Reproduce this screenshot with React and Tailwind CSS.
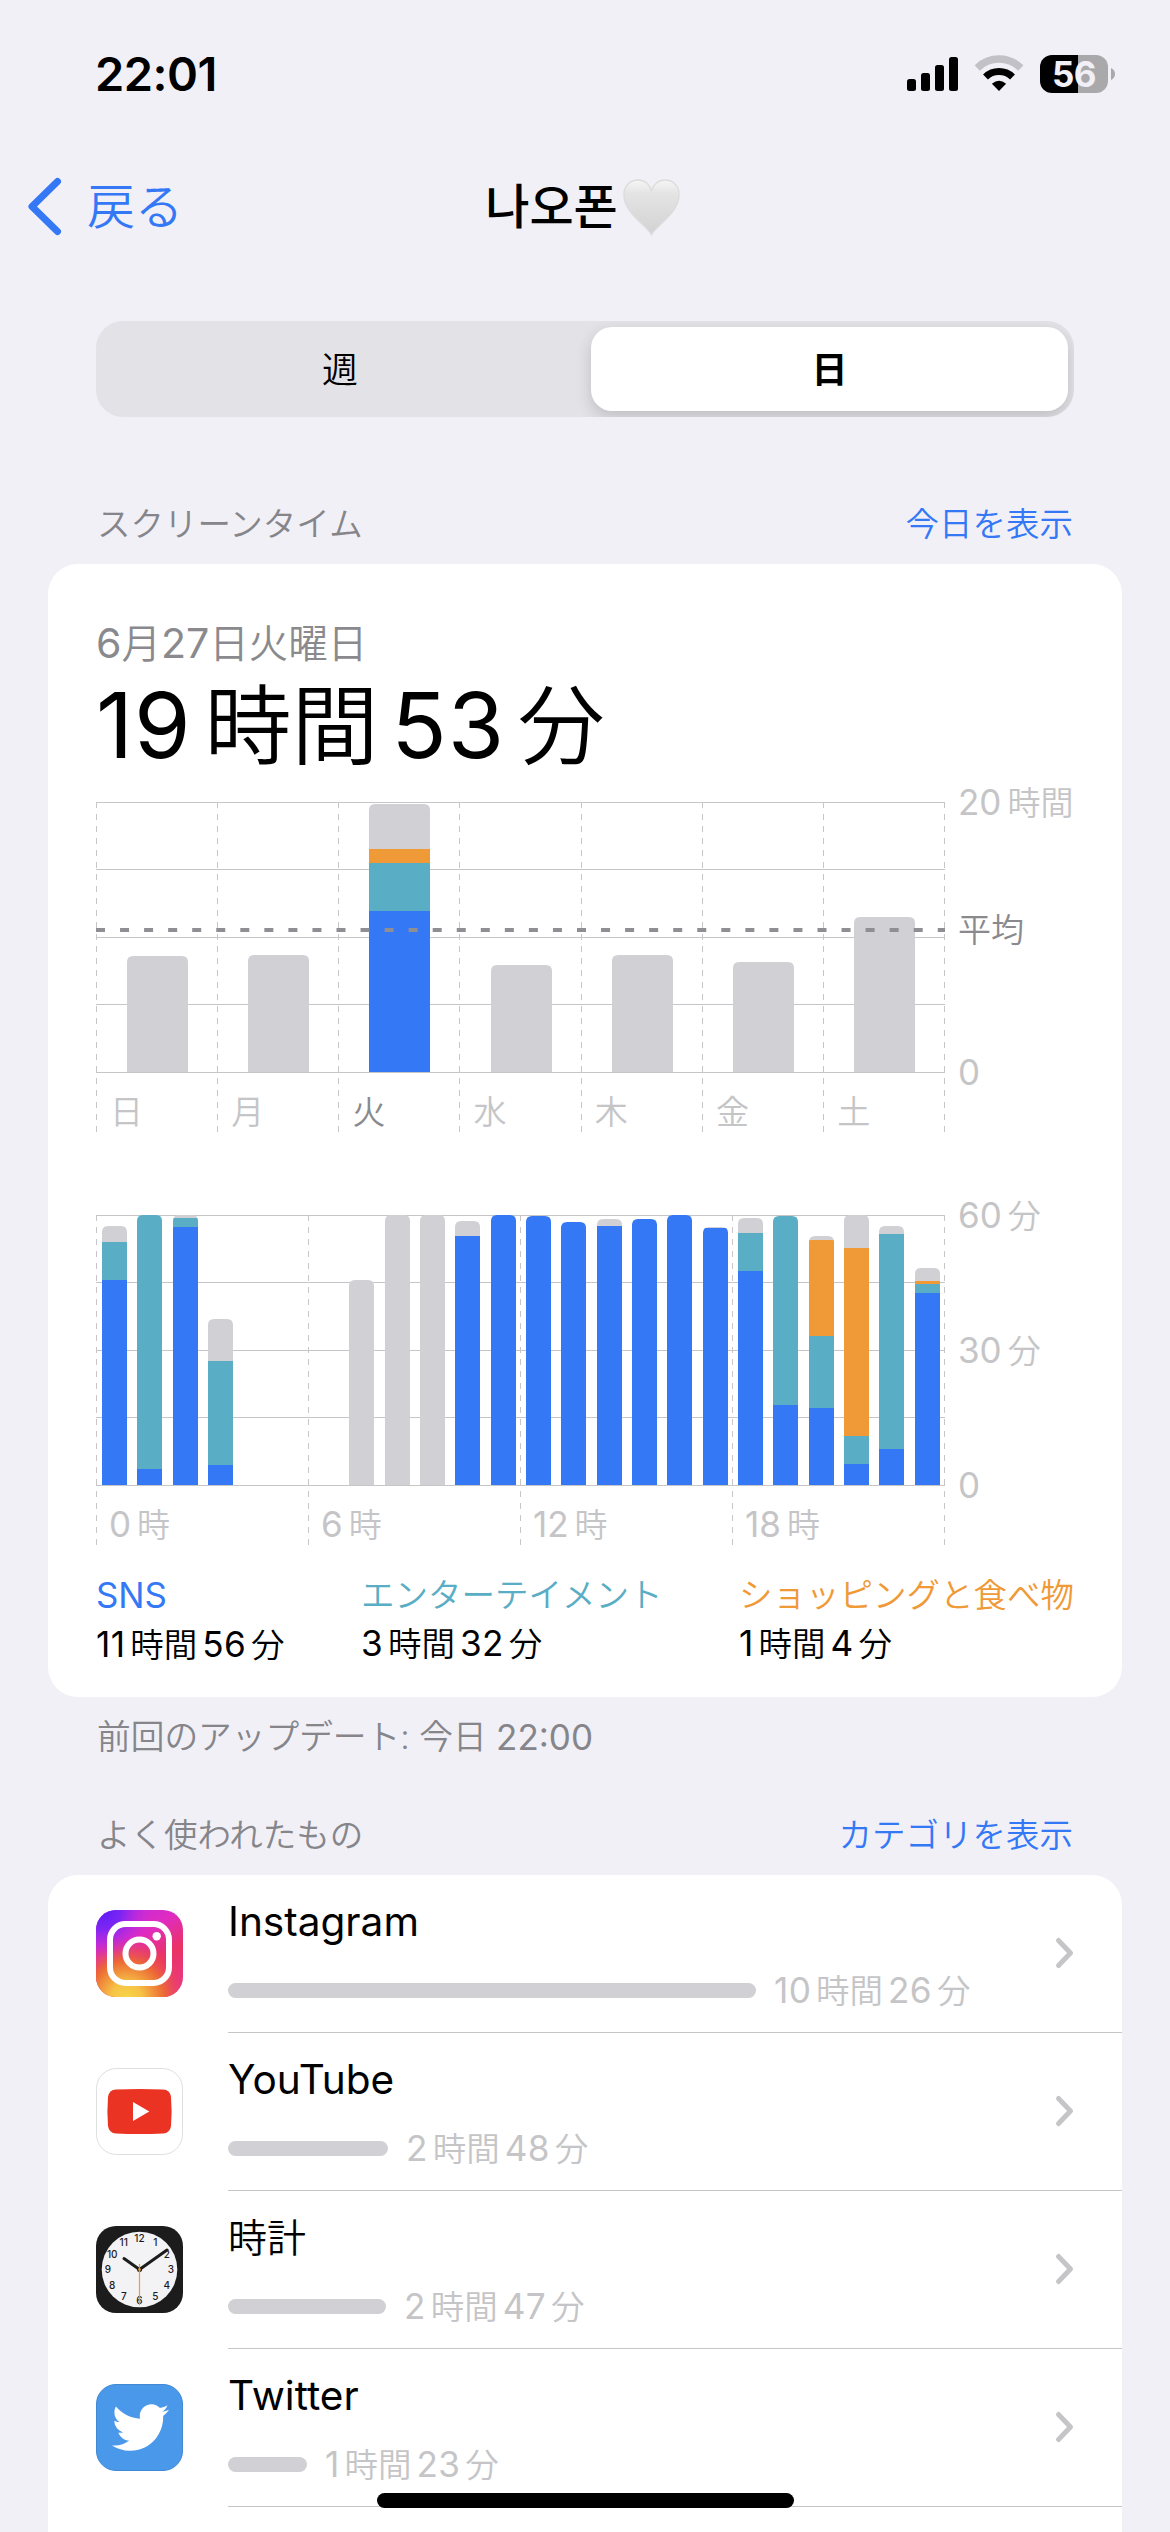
import React from "react";
import { FaTwitter } from "react-icons/fa";

const BLUE = "#3478f6";
const TEAL = "#59adc4";
const ORANGE = "#ef9a37";
const GRAY = "#d1d0d5";
const COLORS = [BLUE, TEAL, ORANGE, GRAY];

// Segment heights in px, bottom to top: SNS, entertainment, shopping, other.
const week = [
  { label: "日", bar: [0, 0, 0, 116] },
  { label: "月", bar: [0, 0, 0, 117] },
  { label: "火", bar: [161, 48, 14, 45], active: true },
  { label: "水", bar: [0, 0, 0, 107] },
  { label: "木", bar: [0, 0, 0, 117] },
  { label: "金", bar: [0, 0, 0, 110] },
  { label: "土", bar: [0, 0, 0, 155] },
];

const hours = [
  [205, 38, 0, 16],
  [16, 254, 0, 0],
  [258, 9, 0, 3],
  [20, 104, 0, 42],
  [0, 0, 0, 0],
  [0, 0, 0, 0],
  [0, 0, 0, 0],
  [0, 0, 0, 205],
  [0, 0, 0, 270],
  [0, 0, 0, 270],
  [249, 0, 0, 15],
  [270, 0, 0, 0],
  [269, 0, 0, 0],
  [263, 0, 0, 0],
  [259, 0, 0, 7],
  [266, 0, 0, 0],
  [270, 0, 0, 0],
  [257, 0, 0, 1],
  [214, 38, 0, 15],
  [80, 189, 0, 0],
  [77, 72, 96, 4],
  [21, 28, 188, 33],
  [36, 215, 0, 8],
  [192, 9, 3, 13],
];

const legend = [
  { name: "SNS", time: "11時間56分", color: "text-[#3478f6]" },
  { name: "エンターテイメント", time: "3時間32分", color: "text-[#59adc4]" },
  { name: "ショッピングと食べ物", time: "1時間4分", color: "text-[#ef9a37]" },
];

const apps = [
  { name: "Instagram", time: "10時間26分", width: 528, Icon: InstagramIcon },
  { name: "YouTube", time: "2時間48分", width: 160, Icon: YouTubeIcon },
  { name: "時計", time: "2時間47分", width: 158, Icon: ClockIcon },
  { name: "Twitter", time: "1時間23分", width: 79, Icon: TwitterIcon },
];

// Latin runs sit slightly larger and heavier than the Japanese around them.
function Mixed({ text, spaced }) {
  return text
    .split(/([0-9A-Za-z:]+)/)
    .filter(Boolean)
    .map((part, i) =>
      /[0-9A-Za-z]/.test(part) ? (
        <span
          key={i}
          className={
            spaced
              ? "mx-[0.14em] text-[1.05em] font-normal tracking-[0.01em] first:ml-0"
              : "text-[1.04em] font-normal"
          }
        >
          {part}
        </span>
      ) : (
        <span key={i}>{part}</span>
      )
    );
}

function ChartText({ x, y, text, fill = "#c5c5c7" }) {
  const [, digits, rest] = text.match(/^(\d*)(.*)$/);
  return (
    <text x={x} y={y} fill={fill} fontSize="33" fontWeight="350">
      {digits && (
        <tspan fontSize="35" fontWeight="400">
          {digits}
        </tspan>
      )}
      {rest && <tspan dx={digits ? 6 : 0}>{rest}</tspan>}
    </text>
  );
}

function Bar({ id, x, width, segments }) {
  const total = segments.reduce((a, b) => a + b, 0);
  if (!total) return null;
  let y = 292;
  return (
    <g>
      <clipPath id={id}>
        <path
          d={`M${x} 292V${298 - total}q0-6 6-6h${width - 12}q6 0 6 6V292z`}
        />
      </clipPath>
      <g clipPath={`url(#${id})`}>
        {segments.map((h, i) => {
          y -= h;
          return h ? (
            <rect key={i} x={x} y={y} width={width} height={h} fill={COLORS[i]} />
          ) : null;
        })}
      </g>
    </g>
  );
}

function Chart({ columns, children }) {
  return (
    <svg
      width="976"
      height="360"
      viewBox="0 0 976 360"
      className="block overflow-visible"
    >
      {[22, 89, 157, 224, 292].map((y) => (
        <rect key={y} x="0" y={y} width="849" height="1" fill="#c6c6c8" />
      ))}
      {Array.from({ length: columns + 1 }, (_, i) => {
        const x = Math.round((i * 848) / columns) + 0.5;
        return (
          <path
            key={i}
            d={`M${x} 22V352`}
            stroke="#c6c6c8"
            strokeDasharray="6 6"
          />
        );
      })}
      {children}
    </svg>
  );
}

function WeekChart() {
  return (
    <Chart columns={7}>
      {week.map((d, i) => (
        <g key={d.label}>
          <Bar
            id={`day-${i}`}
            x={Math.round(i * 121.2 + 31)}
            width={61}
            segments={d.bar}
          />
          <ChartText
            x={i * 121.2 + 14}
            y={344}
            text={d.label}
            fill={d.active ? "#8a8a8e" : undefined}
          />
        </g>
      ))}
      <path
        d="M0 150H849"
        stroke="#8e8e93"
        strokeWidth="4"
        strokeDasharray="9 15.05"
      />
      <ChartText x={862} y={35} text="20時間" />
      <ChartText x={862} y={162} text="平均" fill="#8a8a8e" />
      <ChartText x={862} y={305} text="0" />
    </Chart>
  );
}

function DayChart() {
  return (
    <Chart columns={4}>
      {hours.map((segments, i) => (
        <Bar
          key={i}
          id={`hour-${i}`}
          x={Math.round(i * 35.33 + 6)}
          width={25}
          segments={segments}
        />
      ))}
      {["0時", "6時", "12時", "18時"].map((t, i) => (
        <ChartText key={t} x={i * 212 + 13} y={344} text={t} />
      ))}
      <ChartText x={862} y={35} text="60分" />
      <ChartText x={862} y={170} text="30分" />
      <ChartText x={862} y={305} text="0" />
    </Chart>
  );
}

function InstagramIcon() {
  return (
    <svg width="87" height="87" viewBox="0 0 87 87">
      <defs>
        <linearGradient id="ig-base" x1="0.2" y1="0" x2="0.8" y2="1">
          <stop offset="0" stopColor="#c02bdc" />
          <stop offset="0.35" stopColor="#e02cc0" />
          <stop offset="0.65" stopColor="#ea3263" />
          <stop offset="1" stopColor="#e9388a" />
        </linearGradient>
        <radialGradient id="ig-warm" cx="0.35" cy="1.02" r="0.72">
          <stop offset="0" stopColor="#f8d648" />
          <stop offset="0.25" stopColor="#f6c245" />
          <stop offset="0.6" stopColor="#ec6a35" />
          <stop offset="1" stopColor="#ea3263" stopOpacity="0" />
        </radialGradient>
        <radialGradient id="ig-cool" cx="0.08" cy="0" r="0.55">
          <stop offset="0" stopColor="#5a1df5" />
          <stop offset="0.4" stopColor="#7f25f3" />
          <stop offset="1" stopColor="#c82be0" stopOpacity="0" />
        </radialGradient>
      </defs>
      <rect width="87" height="87" rx="20" fill="url(#ig-base)" />
      <rect width="87" height="87" rx="20" fill="url(#ig-warm)" />
      <rect width="87" height="87" rx="20" fill="url(#ig-cool)" />
      <g fill="none" stroke="#fff" strokeWidth="6">
        <rect x="14" y="14" width="59" height="59" rx="15.5" />
        <circle cx="43.5" cy="43.5" r="14" />
      </g>
      <circle cx="60.7" cy="26.3" r="4.2" fill="#fff" />
    </svg>
  );
}

function YouTubeIcon() {
  return (
    <svg width="87" height="87" viewBox="0 0 87 87">
      <rect x="0.5" y="0.5" width="86" height="86" rx="20" fill="#fff" stroke="#dedee0" />
      <path
        d="M20 21.5Q43.5 20.5 67 21.5Q74 21.8 75 29Q76.2 43.5 75 58Q74 65.2 67 65.5Q43.5 66.5 20 65.5Q13 65.2 12 58Q10.8 43.5 12 29Q13 21.8 20 21.5z"
        fill="#ea3323"
      />
      <path d="M37 34L53.3 43.5L37 53z" fill="#fff" />
    </svg>
  );
}

function ClockIcon() {
  return (
    <svg width="87" height="87" viewBox="0 0 87 87">
      <rect width="87" height="87" rx="20" fill="#1c1c1c" />
      <circle cx="43.5" cy="43.5" r="37.8" fill="#f3f3f6" />
      {Array.from({ length: 12 }, (_, i) => {
        const a = ((i + 1) * Math.PI) / 6;
        return (
          <text
            key={i}
            x={43.5 + Math.sin(a) * 31.5}
            y={43.5 - Math.cos(a) * 31 + 3.6}
            fontSize="10"
            fontWeight="500"
            textAnchor="middle"
            fill="#1c1c1c"
          >
            {i + 1}
          </text>
        );
      })}
      <g stroke="#1c1c1c" strokeWidth="3" strokeLinecap="round">
        <path d="M43.5 43.5L28 32.5" />
        <path d="M43.5 43.5L71 24" />
      </g>
      <circle cx="43.5" cy="43.5" r="2.5" fill="#1c1c1c" />
      <path d="M43.5 38V79" stroke="#ef9a37" strokeWidth="1.2" />
      <circle cx="43.5" cy="43.5" r="1.3" fill="#ef9a37" />
    </svg>
  );
}

function TwitterIcon() {
  return (
    <div className="flex size-[87px] items-center justify-center rounded-[20px] border border-[#4189d3] bg-[#4a98ea]">
      <FaTwitter className="ml-[2px] size-[57px] text-white" />
    </div>
  );
}

function StatusBar() {
  return (
    <div className="flex h-[140px] items-start justify-between pt-[44px] pr-[55px] pl-[95px]">
      <div className="text-[47px] leading-[60px] font-semibold tracking-[-0.5px]">22:01</div>
      <div className="flex pt-[11px]">
        <svg width="68" height="38" viewBox="0 0 68 38">
          <rect x="0" y="24" width="9" height="12" rx="2.5" />
          <rect x="14" y="18" width="9" height="18" rx="2.5" />
          <rect x="28" y="10" width="9" height="26" rx="2.5" />
          <rect x="42" y="2" width="9" height="34" rx="2.5" />
        </svg>
        <svg width="65" height="38" viewBox="0 0 65 38">
          <g fill="none">
            <path d="M2.2 13A31 31 0 0 1 45.8 13" stroke="#c2c1c6" strokeWidth="7.5" />
            <path d="M10.5 22A19.5 19.5 0 0 1 37.5 22" stroke="#000" strokeWidth="7" />
          </g>
          <path d="M24 36L16.9 28.8Q24 22.5 31.1 28.8z" />
        </svg>
        <div className="flex h-[38px] w-[68px] items-center justify-center rounded-[12px] bg-linear-to-r from-black from-56% to-[#a9a9ab] to-56% text-[35px] leading-none font-bold tracking-[-0.5px] text-[#f1f0f6]">
          56
        </div>
        <svg width="7" height="38" viewBox="0 0 7 38">
          <path d="M3 13Q7 15 7 19Q7 23 3 25z" fill="#a9a9ab" />
        </svg>
      </div>
    </div>
  );
}

function NavBar() {
  return (
    <div className="grid h-[134px] grid-cols-3 items-center">
      <div className="flex items-center text-[#3478f6]">
        <svg width="87" height="60" viewBox="0 0 87 60" fill="none">
          <path
            d="M57.5 4.5L32 29.5L57.5 54.5"
            stroke="currentColor"
            strokeWidth="7"
            strokeLinecap="round"
            strokeLinejoin="round"
          />
        </svg>
        <span className="text-[48px] font-[350]">戻る</span>
      </div>
      <div className="flex items-center justify-center pr-[4px]">
        <span className="font-['Inter','Noto_Sans_CJK_KR',sans-serif] text-[48px] leading-none font-medium">
          나오폰
        </span>
        <svg width="59" height="58" viewBox="0 0 60 60" className="ml-1">
          <defs>
            <linearGradient id="heart" x1="0" y1="0" x2="0" y2="1">
              <stop offset="0" stopColor="#f6f6f6" />
              <stop offset="0.25" stopColor="#e4e4e4" />
              <stop offset="1" stopColor="#d2d2d2" />
            </linearGradient>
          </defs>
          <path
            d="M30 58.5C24 48 1.5 36 1.5 17C1.5 8 8 2 16 2C23 2 28 7 30 13C32 7 37 2 44 2C52 2 58.5 8 58.5 17C58.5 36 36 48 30 58.5z"
            fill="url(#heart)"
            stroke="#dcdcdd"
            strokeWidth="1.5"
          />
        </svg>
      </div>
    </div>
  );
}

function SectionHeader({ title, action }) {
  return (
    <div className="flex h-[80px] items-center justify-between px-[97px] text-[33.5px] font-[350]">
      <span className="text-[#85858a]">{title}</span>
      <span className="text-[#3478f6]">{action}</span>
    </div>
  );
}

function AppRow({ name, time, width, Icon }) {
  return (
    <div className="flex h-[158px] pl-[48px]">
      <div className="mt-[35px] mr-[45px] shrink-0">
        <Icon />
      </div>
      <div className="flex grow justify-between border-b border-[#c6c6c8]">
        <div>
          <div className="mt-[18px] h-[58px] text-[39px] leading-[58px] font-[350]">
            <Mixed text={name} />
          </div>
          <div className="mt-[14px] flex h-[50px] items-center">
            <div className="h-[15px] rounded-full bg-[#d1d0d5]" style={{ width }} />
            <div className="ml-[18px] text-[33.5px] leading-[50px] font-[350] whitespace-nowrap text-[#c5c5c7]">
              <Mixed text={time} spaced />
            </div>
          </div>
        </div>
        <svg width="20" height="34" viewBox="0 0 20 34" className="mt-[61px] mr-[48px]" fill="none">
          <path
            d="M4.5 4.5L16.5 17L4.5 29.5"
            stroke="#c5c5c7"
            strokeWidth="5"
            strokeLinecap="round"
            strokeLinejoin="round"
          />
        </svg>
      </div>
    </div>
  );
}

export default function App() {
  return (
    <div className="relative h-[2532px] w-[1170px] overflow-hidden bg-[#f1f0f6] font-['Inter','Noto_Sans_CJK_JP',sans-serif] text-black">
      <StatusBar />
      <NavBar />

      <div className="mx-[96px] mt-[47px] flex h-[96px] overflow-hidden rounded-[27px] bg-[#e3e2e7] p-[6px] text-[36px]">
        <div className="flex w-[489px] items-center justify-center pt-[2px] pr-[13px] font-[350]">週</div>
        <div className="flex grow items-center justify-center rounded-[21px] bg-white pt-[2px] font-bold shadow-[0_6px_16px_rgba(0,0,0,0.16)]">
          日
        </div>
      </div>

      <div className="mt-[67px]">
        <SectionHeader title="スクリーンタイム" action="今日を表示" />
      </div>

      <div className="mx-[48px] h-[1133px] rounded-[30px] bg-white px-[48px] pt-[54px]">
        <div className="h-[50px] text-[39.5px] leading-[50px] font-[350] text-[#8a8a8e]">
          <Mixed text="6月27日火曜日" />
        </div>
        <div className="mt-[7px] h-[105px] text-[87px] leading-[100px] font-[350]">
          <Mixed text="19時間53分" spaced />
        </div>
        <WeekChart />
        <div className="h-[53px]" />
        <DayChart />
        <div className="mt-[18px] flex justify-between text-[33.5px] leading-[48px] font-[350]">
          {legend.map((item) => (
            <div key={item.name}>
              <div className={item.color}>
                <Mixed text={item.name} />
              </div>
              <div>
                <Mixed text={item.time} spaced />
              </div>
            </div>
          ))}
        </div>
      </div>

      <div className="flex h-[80px] items-center px-[97px] text-[33.7px] font-[350] whitespace-pre text-[#85858a]">
        <Mixed text="前回のアップデート: 今日 22:00" />
      </div>

      <div className="mt-[18px]">
        <SectionHeader title="よく使われたもの" action="カテゴリを表示" />
      </div>

      <div className="mx-[48px] rounded-t-[30px] bg-white pb-8">
        {apps.map((app) => (
          <AppRow key={app.name} {...app} />
        ))}
      </div>

      <div className="absolute top-[2493px] left-[377px] h-[15px] w-[417px] rounded-full bg-black" />
    </div>
  );
}
